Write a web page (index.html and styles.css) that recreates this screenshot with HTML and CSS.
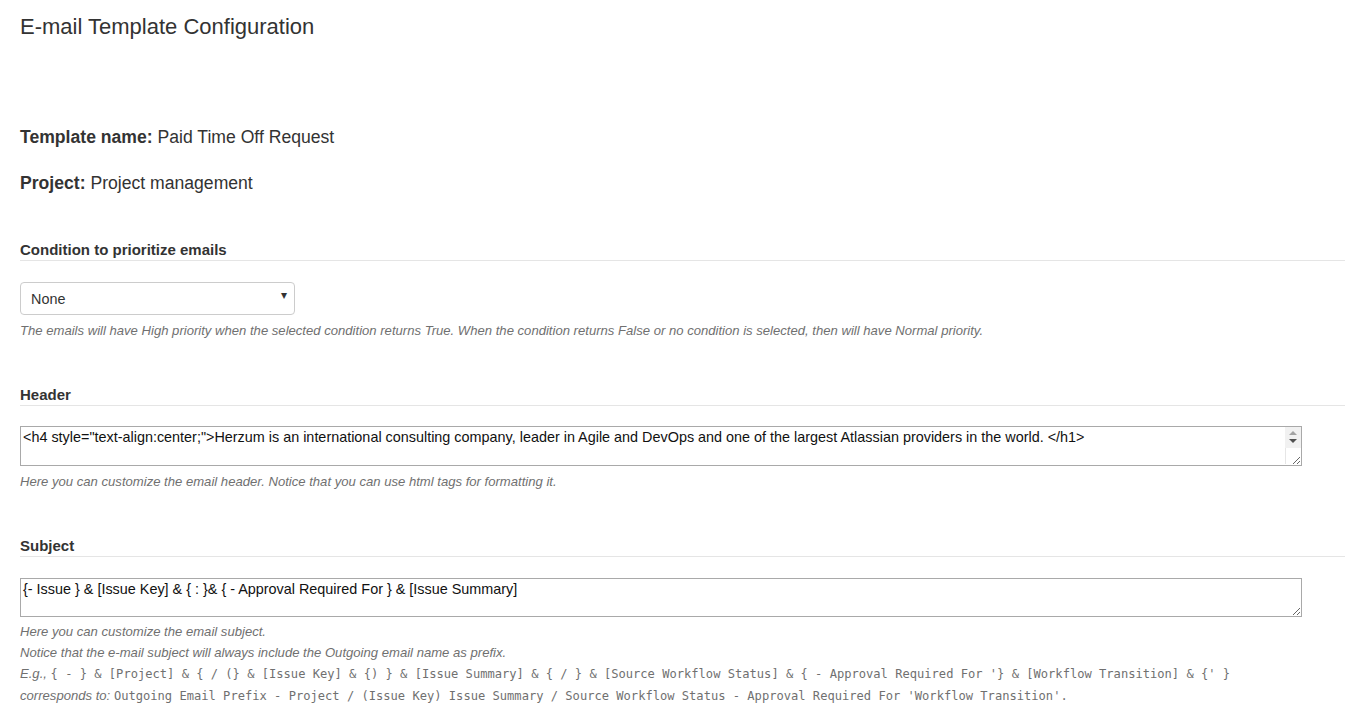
FILE: index.html
```html
<!DOCTYPE html>
<html lang="en">
<head>
<meta charset="utf-8">
<title>E-mail Template Configuration</title>
<link rel="stylesheet" href="styles.css">
</head>
<body>
<div class="page">
  <h1 class="title">E-mail Template Configuration</h1>

  <p class="meta meta-first"><b>Template name:</b> Paid Time Off Request</p>
  <p class="meta"><b>Project:</b> Project management</p>

  <section class="field field-condition">
    <h2 class="field-title">Condition to prioritize emails</h2>
    <div class="select-wrap">
      <select class="select">
        <option>None</option>
      </select>
    </div>
    <p class="help">The emails will have High priority when the selected condition returns True. When the condition returns False or no condition is selected, then will have Normal priority.</p>
  </section>

  <section class="field field-header">
    <h2 class="field-title field-title-tight">Header</h2>
    <div class="textarea-wrap">
      <textarea class="textarea textarea-header" rows="2">&lt;h4 style="text-align:center;"&gt;Herzum is an international consulting company, leader in Agile and DevOps and one of the largest Atlassian providers in the world. &lt;/h1&gt;</textarea>
      <div class="scrollbar" aria-hidden="true">
        <span class="sb-up"></span>
        <span class="sb-down"></span>
      </div>
      <div class="scroll-corner" aria-hidden="true"></div>
    </div>
    <p class="help">Here you can customize the email header. Notice that you can use html tags for formatting it.</p>
  </section>

  <section class="field field-subject">
    <h2 class="field-title">Subject</h2>
    <textarea class="textarea textarea-subject" rows="2">{- Issue } &amp; [Issue Key] &amp; { : }&amp; { - Approval Required For } &amp; [Issue Summary]</textarea>
    <div class="help help-lines">
      <p>Here you can customize the email subject.</p>
      <p>Notice that the e-mail subject will always include the Outgoing email name as prefix.</p>
      <p>E.g., <code>{ - } &amp; [Project] &amp; { / (} &amp; [Issue Key] &amp; {) } &amp; [Issue Summary] &amp; { / } &amp; [Source Workflow Status] &amp; { - Approval Required For '} &amp; [Workflow Transition] &amp; {' }</code></p>
      <p>corresponds to: <code>Outgoing Email Prefix - Project / (Issue Key) Issue Summary / Source Workflow Status - Approval Required For 'Workflow Transition'.</code></p>
    </div>
  </section>
</div>
</body>
</html>
```

FILE: styles.css
```css
html, body {
  margin: 0;
  padding: 0;
  background: #fff;
}

body {
  font-family: "Liberation Sans", Arial, sans-serif;
  color: #333;
  font-size: 14px;
}

.page {
  padding: 14px 0 0 20px;
  display: flex;
  flex-direction: column;
}

.title {
  margin: 0;
  font-size: 22px;
  font-weight: normal;
  line-height: 26px;
  color: #333;
}

.meta {
  margin: 0;
  font-size: 17.6px;
  line-height: 22px;
}

.meta-first {
  margin-top: 86px;
}

.meta + .meta {
  margin-top: 24px;
}

.meta b {
  font-weight: bold;
}

.field {
  display: flex;
  flex-direction: column;
  align-items: flex-start;
}

.field-condition {
  margin-top: 47px;
}

.field-header {
  margin-top: 47px;
}

.field-subject {
  margin-top: 47px;
}

.field-title {
  margin: 0;
  align-self: stretch;
  font-size: 15px;
  font-weight: bold;
  line-height: 18px;
  padding-bottom: 1px;
  border-bottom: 1px solid #e5e5e5;
  margin-bottom: 21px;
}

.field-title-tight {
  margin-bottom: 20px;
}

.select-wrap {
  position: relative;
  width: 275px;
}

.select-wrap::after {
  content: "▾";
  position: absolute;
  right: 8px;
  top: 6px;
  font-size: 12px;
  color: #333;
  pointer-events: none;
}

.select {
  appearance: none;
  -webkit-appearance: none;
  width: 275px;
  height: 33px;
  box-sizing: border-box;
  padding: 0 10px;
  font-family: "Liberation Sans", Arial, sans-serif;
  font-size: 14.4px;
  color: #333;
  background: #fff;
  border: 1px solid #ccc;
  border-radius: 4px;
}

.help {
  margin: 8px 0 0;
  font-size: 13.1px;
  font-style: italic;
  color: #707070;
  line-height: 16px;
}

.textarea-wrap {
  position: relative;
  width: 1282px;
}

.textarea {
  display: block;
  width: 1282px;
  box-sizing: border-box;
  margin: 0;
  padding: 2px 2px;
  font-family: "Liberation Sans", Arial, sans-serif;
  font-size: 14.4px;
  line-height: 17px;
  color: #111;
  border: 1px solid #a9a9a9;
  border-radius: 0;
  resize: vertical;
  overflow: hidden;
}

.textarea-header {
  height: 40px;
  padding-right: 20px;
}

.textarea-subject {
  height: 39px;
}

.scrollbar {
  position: absolute;
  top: 1px;
  right: 1px;
  width: 16px;
  height: 21px;
  background: #f1f1f1;
  pointer-events: none;
}

.sb-up,
.sb-down {
  position: absolute;
  left: 4px;
  width: 0;
  height: 0;
  border-left: 4px solid transparent;
  border-right: 4px solid transparent;
}

.sb-up {
  top: 4px;
  border-bottom: 4px solid #a3a3a3;
}

.sb-down {
  top: 12px;
  border-top: 4px solid #505050;
}

.scroll-corner {
  position: absolute;
  top: 22px;
  right: 1px;
  width: 16px;
  height: 16px;
  border-left: 1px solid #e6e6e6;
  box-sizing: border-box;
  pointer-events: none;
}

.help-lines {
  margin-top: 4px;
  line-height: 21px;
}

.help-lines p {
  margin: 0;
}

.help-lines code {
  font-family: "DejaVu Sans Mono", "Liberation Mono", monospace;
  font-style: normal;
  font-size: 12.1px;
  color: #707070;
}
```
